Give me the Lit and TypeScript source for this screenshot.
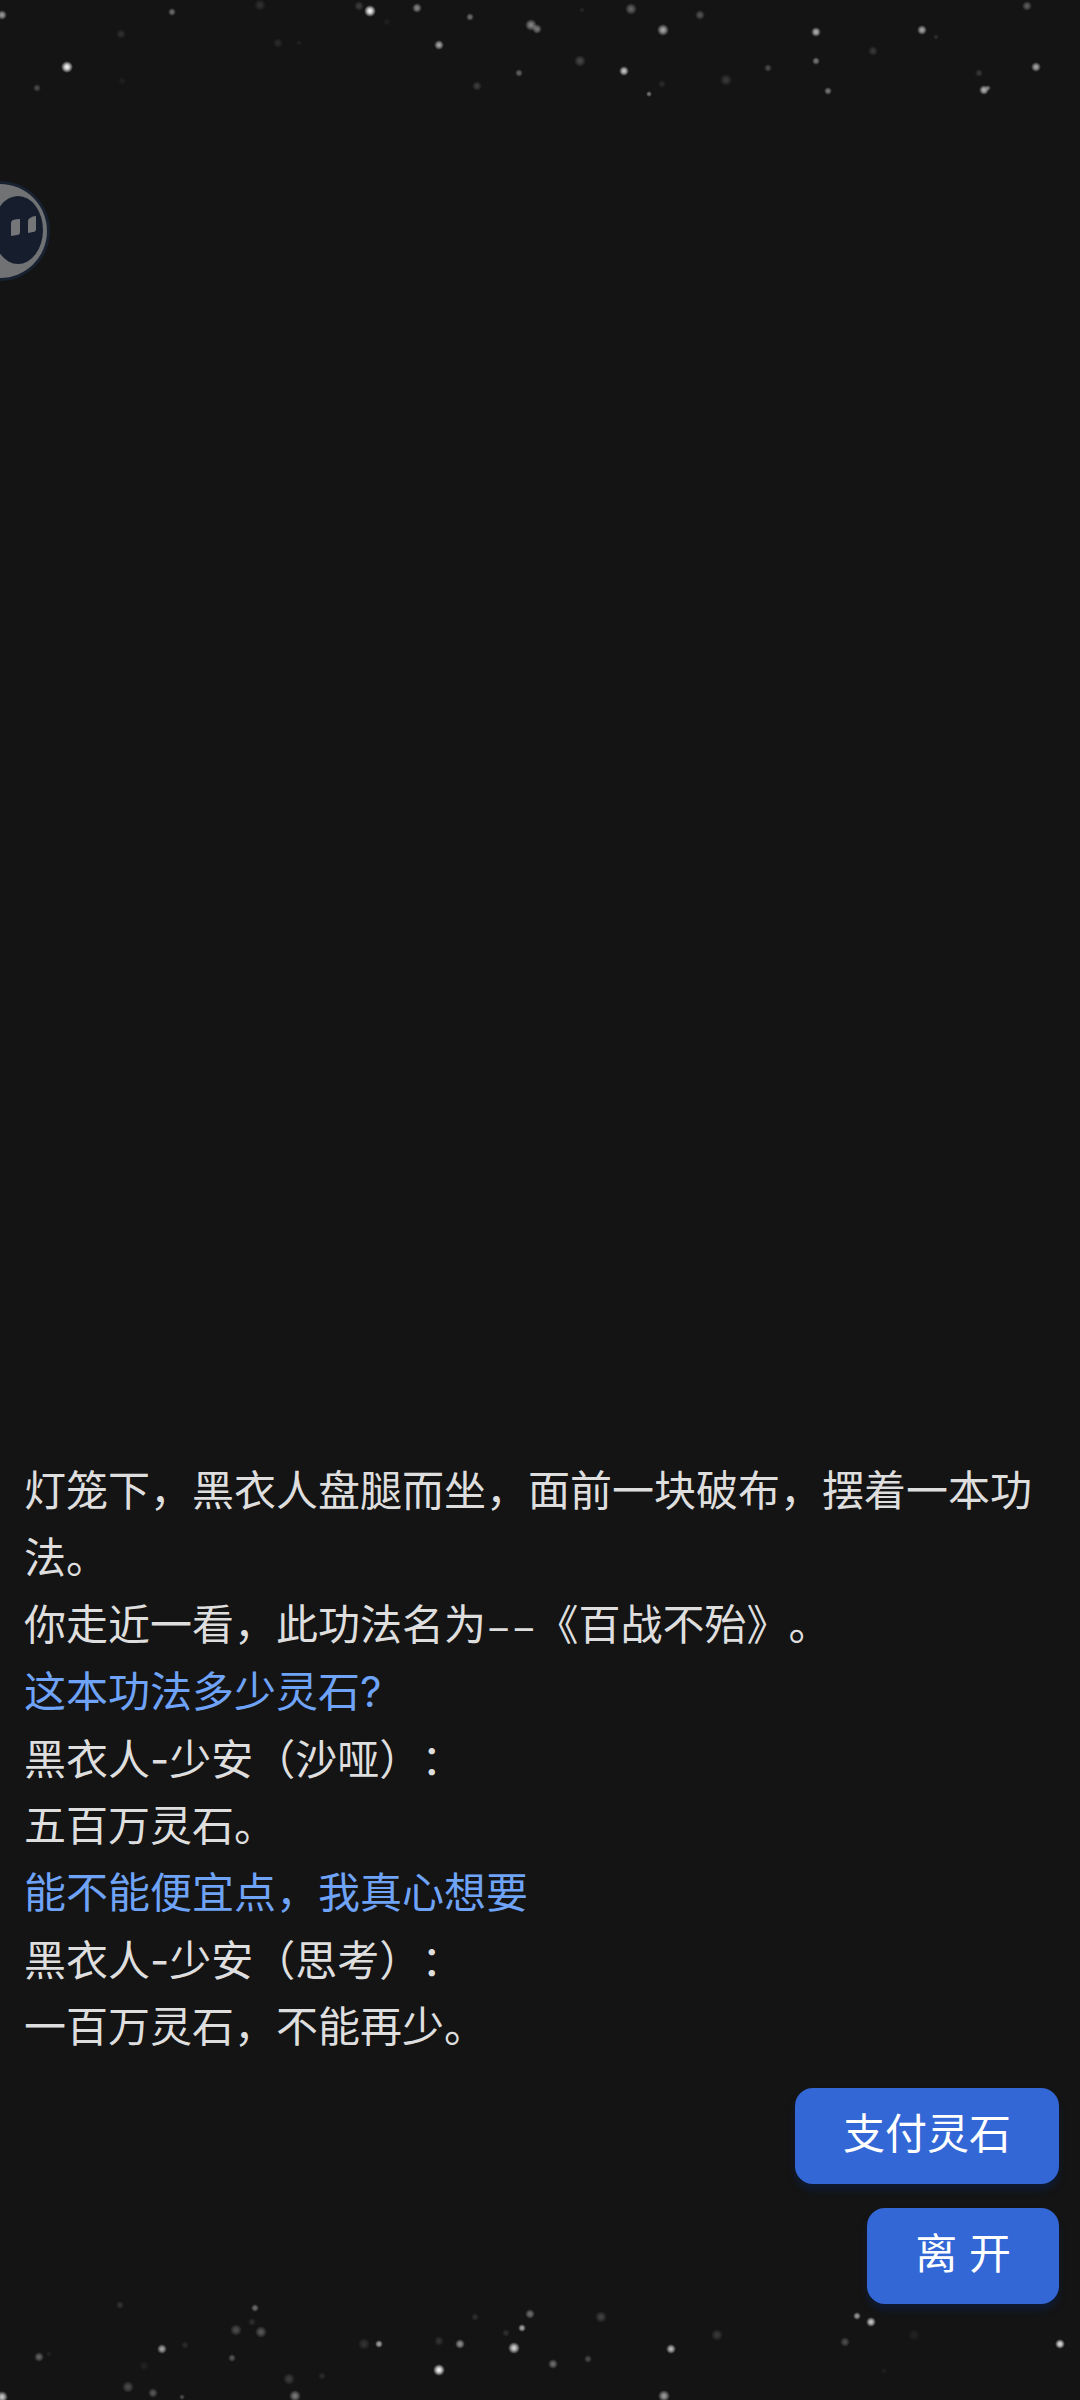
import { LitElement, html, svg, css } from "lit";
import { customElement, property } from "lit/decorators.js";

type Star = [x: number, y: number, radius: number, brightness: number];

const TOP_STARS: Star[] = [
  [2, 15, 5, 0.6], [67, 67, 6, 1], [37, 88, 4, 0.25], [121, 34, 5, 0.12],
  [172, 12, 4, 0.4], [260, 5, 6, 0.12], [278, 43, 5, 0.1], [122, 81, 4, 0.05],
  [359, 6, 5, 0.18], [370, 11, 6, 1], [417, 8, 5, 0.5], [470, 17, 4, 0.4],
  [439, 45, 5, 0.65], [531, 25, 6, 0.5], [537, 29, 5, 0.45], [519, 73, 4, 0.35],
  [477, 86, 5, 0.18], [299, 43, 3, 0.06], [387, 22, 4, 0.05],
  [631, 9, 6, 0.35], [663, 30, 6, 0.65], [700, 15, 5, 0.28], [580, 61, 6, 0.22],
  [624, 71, 5, 0.8], [649, 94, 3, 0.45], [662, 84, 4, 0.1], [726, 80, 6, 0.16],
  [768, 68, 4, 0.25], [816, 32, 5, 0.7], [816, 61, 4, 0.45], [828, 91, 4, 0.45],
  [873, 51, 5, 0.16], [922, 30, 5, 0.65], [936, 37, 3, 0.12], [979, 73, 4, 0.16],
  [984, 90, 5, 0.7], [988, 88, 3, 0.4], [1027, 6, 5, 0.32], [1036, 67, 5, 0.65],
  [582, 10, 3, 0.08],
];

const BOTTOM_STARS: Star[] = [
  [2, 107, 6, 0.8], [39, 67, 5, 0.35], [49, 64, 3, 0.06], [120, 15, 4, 0.14],
  [162, 59, 5, 0.65], [185, 55, 4, 0.1], [144, 76, 5, 0.06], [128, 97, 6, 0.25],
  [153, 103, 5, 0.3], [182, 107, 3, 0.25], [236, 40, 6, 0.25], [261, 42, 6, 0.3],
  [255, 18, 4, 0.4], [252, 32, 4, 0.12], [232, 68, 4, 0.3], [289, 89, 6, 0.18],
  [295, 106, 6, 0.45], [322, 86, 4, 0.1], [364, 54, 6, 0.14], [379, 54, 4, 0.65],
  [439, 51, 5, 0.14], [439, 80, 6, 1], [460, 54, 5, 0.55], [475, 27, 4, 0.12],
  [506, 43, 4, 0.12], [514, 58, 6, 0.85], [522, 38, 4, 0.65], [530, 24, 5, 0.4],
  [553, 74, 5, 0.4], [588, 69, 4, 0.25], [601, 27, 6, 0.2], [664, 106, 6, 0.6],
  [671, 59, 5, 0.75], [717, 45, 6, 0.16], [845, 52, 5, 0.25], [857, 26, 4, 0.6],
  [871, 32, 5, 0.8], [914, 45, 6, 0.06], [1060, 54, 5, 0.9], [884, 81, 3, 0.05],
];

@customElement("star-strip")
export class StarStrip extends LitElement {
  @property({ attribute: false }) stars: Star[] = [];

  static styles = css`
    :host { display: block; }
    .sky { display: block; width: 100%; height: auto; }
  `;

  render() {
    return html`
      <svg class="sky" viewBox="0 0 1080 110" aria-hidden="true">
        <defs>
          <radialGradient id="glow">
            <stop offset="0" stop-color="#fff"></stop>
            <stop offset="0.4" stop-color="#fff" stop-opacity="0.75"></stop>
            <stop offset="1" stop-color="#fff" stop-opacity="0"></stop>
          </radialGradient>
        </defs>
        ${this.stars.map(
          ([x, y, r, o]) => svg`<circle cx=${x} cy=${y} r=${r} opacity=${o} fill="url(#glow)"></circle>`,
        )}
      </svg>
    `;
  }
}

type Line = { text: string; kind: "narration" | "player" | "speaker"; dash?: string; rest?: string };

const STORY: Line[] = [
  { kind: "narration", text: "灯笼下，黑衣人盘腿而坐，面前一块破布，摆着一本功法。" },
  { kind: "narration", text: "你走近一看，此功法名为", dash: "––", rest: "《百战不殆》。" },
  { kind: "player", text: "这本功法多少灵石?" },
  { kind: "speaker", text: "黑衣人-少安（沙哑）：" },
  { kind: "narration", text: "五百万灵石。" },
  { kind: "player", text: "能不能便宜点，我真心想要" },
  { kind: "speaker", text: "黑衣人-少安（思考）：" },
  { kind: "narration", text: "一百万灵石，不能再少。" },
];

@customElement("app-root")
export class AppRoot extends LitElement {
  static styles = css`
    :host {
      display: block;
      font-family: Inter, "Noto Sans CJK SC", sans-serif;
      font-size: 42px;
      line-height: 67px;
      color: #dedede;
      background: #141414;
    }
    .page {
      position: relative;
      display: flex;
      flex-direction: column;
      justify-content: space-between;
      min-height: 100vh;
      box-sizing: border-box;
      overflow: hidden;
    }
    .bottom-sky { position: absolute; left: 0; right: 0; bottom: 0; }
    .content {
      position: relative;
      display: flex;
      flex-direction: column;
      gap: 28px;
      padding: 0 21px 96px 24px;
    }
    .story { text-spacing-trim: space-all; }
    .line { margin: 0; }
    .player { color: #6ea3f7; }
    .speaker { padding-top: 2px; line-height: 65px; }
    .dash { font-family: "Liberation Mono", monospace; line-height: 1; }
    .actions { display: flex; flex-direction: column; align-items: flex-end; gap: 24px; }
    .action {
      border: 0;
      margin: 0;
      padding: 0 48px 6px;
      height: 96px;
      border-radius: 18px;
      background: #3367d6;
      color: #fff;
      font: inherit;
      box-shadow: 0 6px 6px #0f1b33;
      cursor: pointer;
    }
    .assistant {
      position: absolute;
      top: 180px;
      left: 0;
      border: 0;
      padding: 0;
      background: none;
      cursor: pointer;
    }
    .face { display: block; }
  `;

  render() {
    return html`
      <main class="page">
        <star-strip .stars=${TOP_STARS}></star-strip>
        <button class="assistant" type="button" aria-label="助手">
          <svg class="face" width="52" height="102" viewBox="0 0 52 102" aria-hidden="true">
            <circle cx="0" cy="51" r="50" fill="#182130"></circle>
            <circle cx="0" cy="51" r="47" fill="#707274"></circle>
            <ellipse cx="18" cy="50" rx="25" ry="34" fill="#161e2e"></ellipse>
            <path d="M13 40 Q16 39 20 39 V52 Q20 55 17 55 L11 56 V43 Q11 41 13 40Z" fill="#747678"></path>
            <path d="M30 38 Q33 36 36 36 V49 Q36 52 33 52 L28 53 V41 Q28 39 30 38Z" fill="#747678"></path>
          </svg>
        </button>
        <star-strip class="bottom-sky" .stars=${BOTTOM_STARS}></star-strip>
        <section class="content">
          <div class="story">
            ${STORY.map(
              (l) => html`<p class="line ${l.kind}">${l.text}${l.dash ? html`<span class="dash">${l.dash}</span>` : ""}${l.rest ?? ""}</p>`,
            )}
          </div>
          <div class="actions">
            <button class="action" type="button">支付灵石</button>
            <button class="action" type="button">离 开</button>
          </div>
        </section>
      </main>
    `;
  }
}
